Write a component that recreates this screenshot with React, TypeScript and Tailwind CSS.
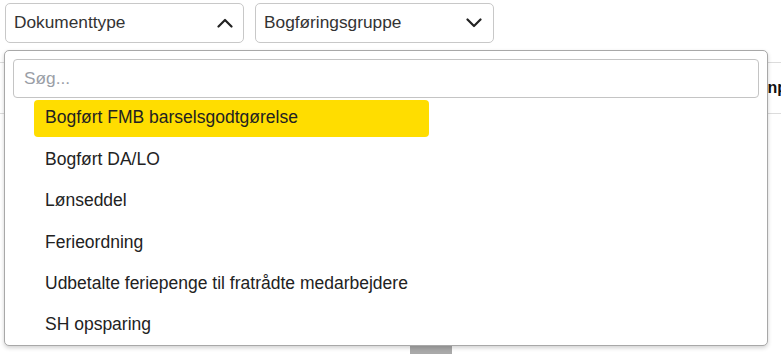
import React, { useState } from "react";

const items = [
  "Bogført FMB barselsgodtgørelse",
  "Bogført DA/LO",
  "Lønseddel",
  "Ferieordning",
  "Udbetalte feriepenge til fratrådte medarbejdere",
  "SH opsparing",
];

const Chevron = ({ up }: { up?: boolean }) => (
  <svg width="16" height="10" viewBox="0 0 16 10" fill="none" className={up ? "" : "rotate-180"}>
    <polyline
      points="1.5,8.5 8,2 14.5,8.5"
      stroke="#222"
      strokeWidth="2.2"
      strokeLinecap="round"
      strokeLinejoin="round"
    />
  </svg>
);

const App = () => {
  const [active] = useState(0);

  return (
    <div className="relative h-[354px] w-[781px] overflow-hidden bg-white font-['Liberation_Sans',Arial,sans-serif]">
      <div className="flex gap-[11px] pl-[5px] pt-[3px]">
        <div className="relative">
          <button
            type="button"
            className="flex h-[40px] w-[239px] items-center justify-between rounded-[5px] border border-[#c8c8c8] bg-white pl-[8px] pr-[10px] text-[17.3px] text-[#333]"
          >
            Dokumenttype
            <Chevron up />
          </button>

          <div className="absolute left-[-1px] top-[47px] z-10 w-[764px] rounded-[5px] border border-[#a8a8a8] bg-white px-[8px] pt-[8px] shadow-[0_2px_4px_rgba(0,0,0,0.18)]">
            <input
              placeholder="Søg..."
              className="h-[39px] w-[746px] rounded-[4px] border border-[#c4c4c4] px-[10px] text-[17.3px] text-[#222] outline-none placeholder:text-[#9a9ea6]"
            />
            <div className="mt-[2px] flex flex-col gap-[4.4px] pb-[1px] pl-[21px]">
              {items.map((item, idx) => (
                <div
                  key={item}
                  className={`flex h-[37px] w-[395px] items-center whitespace-nowrap rounded-[4px] pb-[2px] pl-[11px] text-[17.5px] text-[#222] ${
                    idx === active ? "bg-[#ffdd00]" : ""
                  }`}
                >
                  {item}
                </div>
              ))}
            </div>
          </div>
        </div>

        <button
          type="button"
          className="flex h-[40px] w-[239px] items-center justify-between rounded-[5px] border border-[#c8c8c8] bg-white pl-[8px] pr-[11px] text-[17.3px] text-[#333]"
        >
          Bogføringsgruppe
          <Chevron />
        </button>
      </div>

      {/* table behind the menu */}
      <div className="mt-[19px] flex h-[52px] items-center border-y border-[#dcdcdc] pl-[748px]">
        <span className="whitespace-nowrap text-[16px] font-bold text-[#111]">Lønperiode</span>
      </div>

      <div className="mt-[226px] pl-[410px]">
        <div className="flex h-[20px] w-[42px] justify-center rounded-[3px] bg-[#a9a9a9]">
          <div className="mt-[3px] h-[3px] w-[13px] rounded-b-[2px] bg-[#e6e6e6]" />
        </div>
      </div>
    </div>
  );
};

export default App;
